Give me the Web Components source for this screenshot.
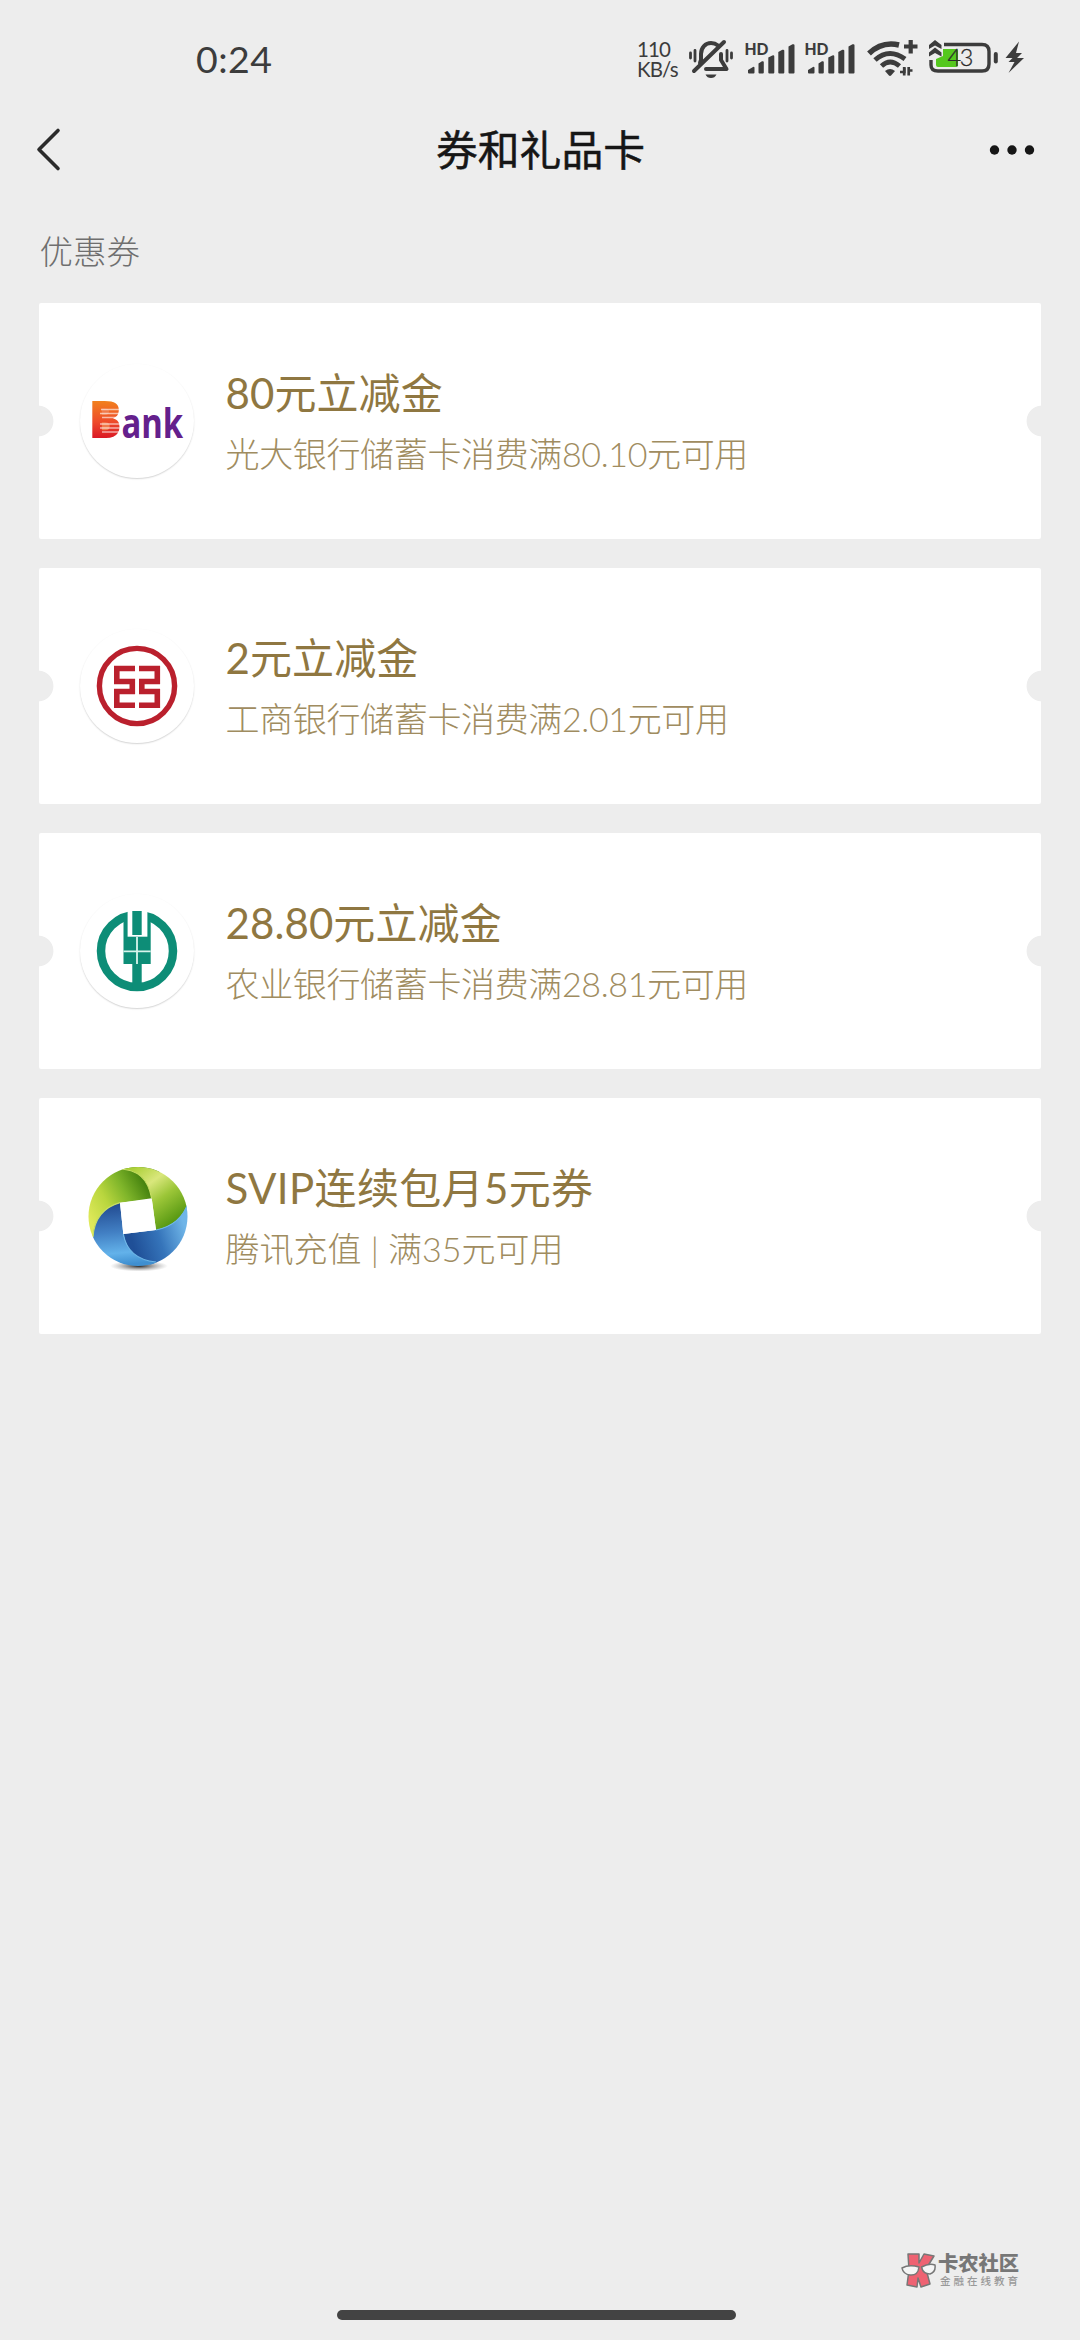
<!DOCTYPE html>
<html lang="zh-CN">
<head>
<meta charset="utf-8">
<title>券和礼品卡</title>
<style>
html,body{margin:0;background:#ededed}
body{width:1080px;height:2340px;overflow:hidden;font-family:Lato,"Noto Sans CJK SC",sans-serif}
</style>
</head>
<body>
<wallet-page></wallet-page>
<script>
const define = (name, html) => customElements.define(name, class extends HTMLElement {
  constructor() {
    super();
    const t = document.createElement('template');
    t.innerHTML = html;
    this.attachShadow({mode: 'open'}).append(t.content.cloneNode(true));
  }
});

define('signal-icon', `
<style>:host{display:block;width:50px;height:40px}svg{display:block}</style>
<svg width="50" height="40" viewBox="0 0 50 40" fill="#3c3c3c">
<text x="-0.5" y="15.5" font-family="Lato" font-weight="900" font-size="16.5" textLength="24" lengthAdjust="spacingAndGlyphs">HD</text>
<path d="M3 31l5-3q1.500-.6 1.500 1v4.500q0 1-1 1H4q-1 0-1-1zM13.500 24.500l3.500-2.200q1.800-.6 1.800 1v10.200q0 1-1 1h-3.300q-1 0-1-1zM23.300 18.500l4-2q2-.6 2 1v16q0 1-1 1H24.300q-1 0-1-1zM33.300 13l4-2.200q2-.6 2 1v21.700q0 1-1 1H34.300q-1 0-1-1zM43.500 7.500l4-2.200q2-.6 2 1v27.200q0 1-1 1h-4q-1 0-1-1z"/>
</svg>`);

define('bell-icon', `
<style>:host{display:block;width:46px;height:40px}svg{display:block}</style>
<svg width="46" height="40" viewBox="0 0 46 40" fill="none" stroke="#3c3c3c" stroke-linecap="round" stroke-linejoin="round">
<path d="M12 24l1-3v-6c0-6.500 4.500-11 10-11 3 0 5 .8 7 2.500" stroke-width="4"/>
<path d="M33 15v6l5.500 9H18" stroke-width="4"/>
<path d="M6 32L36 3" stroke-width="4"/>
<path d="M17.500 35.500h11q-1.700 3.500-5.500 3.500t-5.500-3.500z" fill="#3c3c3c" stroke="none"/>
<path d="M2.500 14v5M7 11.500v10.500M43.500 14v5M39 11.500v10.500" stroke-width="2.800"/>
</svg>`);

define('wifi-icon', `
<style>:host{display:block;width:52px;height:40px}svg{display:block}</style>
<svg width="52" height="40" viewBox="0 0 52 40" fill="none" stroke="#3c3c3c">
<path d="M2 14.500Q15 2 32 6" stroke-width="5.500"/>
<path d="M8 21Q22 8.500 38 20" stroke-width="5"/>
<path d="M14.500 27Q23 19 32.500 27" stroke-width="4.800"/>
<path d="M18 32q5-4 10 0l-3.700 4.300q-1.300 1.200-2.600 0z" fill="#3c3c3c" stroke="none"/>
<path d="M37 7.500h13.500M43.700 1v13.500" stroke-width="4.200"/>
<path d="M33 33h4.500v-4.500M37.200 28v8.500M41.700 28v8.500M41.700 31.500H45.500" stroke-width="2.700"/>
</svg>`);

define('battery-icon', `
<style>:host{display:block;width:96px;height:40px}svg{display:block}</style>
<svg width="96" height="40" viewBox="0 0 96 40" fill="none" stroke="#3c3c3c">
<path d="M15 5.500h38q7 0 7 7v12.500q0 7-7 7H9q-7 0-7-6v-5" stroke-width="3.400"/>
<path d="M7 26V20l7-3V10h13q2 0 2 2v14q0 2-2 2H9q-2 0-2-2z" fill="#55c81f" stroke="none"/>
<path d="M0 6l6-5 6.500 5v4L6 6.500 0 10zM0 13.500l6-5 6.500 5v4L6 14 0 17.500z" fill="#3c3c3c" stroke="none"/>
<text x="18.500" y="26.800" font-family="Lato" font-weight="300" font-size="23.500" fill="#2c2c2c" stroke="#2c2c2c" stroke-width=".3" textLength="26">43</text>
<path d="M66.800 15v7.500" stroke-width="4" stroke-linecap="round"/>
<path d="M90 2.500L76.500 19h7l-4 4h6l-6 11 15.500-15h-7l5-5h-6z" fill="#3c3c3c" stroke="none"/>
</svg>`);

define('status-bar', `
<style>
:host{display:flex;height:118px;align-items:center;color:#3c3c3c;padding:0 55px 0 196px;box-sizing:border-box}
time{font:37.500px/50px Lato;letter-spacing:.5px;flex:1}
.rate{width:51px;font:20.500px/20px Lato;letter-spacing:-.9px}
.rate span{display:block}
.icons{display:flex;height:40px;align-items:flex-start}
bell-icon{margin-right:11px}signal-icon{margin-right:10px}wifi-icon{margin:0 10px 0 2px}
</style>
<time>0:24</time><div class="rate"><span>110</span><span>KB/s</span></div>
<div class="icons"><bell-icon></bell-icon><signal-icon></signal-icon><signal-icon></signal-icon><wifi-icon></wifi-icon><battery-icon></battery-icon></div>`);

define('nav-bar', `
<style>
:host{display:flex;height:63px;align-items:center;padding:0 45px 0 36px;color:#161616}
svg{display:block;width:46px;height:46px}
h1{flex:1;margin:0;padding:0 0 3px 10px;text-align:center;font:400 41.800px/60px "Noto Sans CJK SC",sans-serif;-webkit-text-stroke:.5px #161616}
</style>
<svg viewBox="0 0 46 46" fill="none" stroke="#2b2b2b" stroke-width="3.600" stroke-linecap="round" stroke-linejoin="round"><path d="M22 3.500L3 22.500 22 41.500"/></svg>
<h1><slot></slot></h1>
<svg viewBox="0 0 46 46" fill="#161616"><circle cx="5.500" cy="23" r="4.700"/><circle cx="23" cy="23" r="4.700"/><circle cx="40.500" cy="23" r="4.700"/></svg>`);

define('coupon-card', `
<style>
:host{display:flex;align-items:center;width:1002px;height:236px;box-sizing:border-box;border-radius:2px;padding-left:41px;
background:radial-gradient(circle at -1px 118px,#ededed 15px,transparent 15.800px),radial-gradient(circle at 1003px 118px,#ededed 15px,transparent 15.800px),#fff;color:#8f7741;--sub-ls:-.35px;--title-ls:.1px}
:host([plain]){--sub-ls:0;--title-ls:.35px}
.logo{width:114px;height:114px;border-radius:50%;box-shadow:0 1px 1.500px #d4d4d4;background:#fff;margin-right:31.500px}
:host([plain]) .logo{box-shadow:none}
h2{margin:3.500px 0 0;font:400 42px/60px Lato,"Noto Sans CJK SC",sans-serif;white-space:nowrap;letter-spacing:var(--title-ls)}
p{margin:3px 0 0;font:300 34px/56px Lato,"Noto Sans CJK SC",sans-serif;color:#a08c60;white-space:nowrap;letter-spacing:var(--sub-ls)}
</style>
<div class="logo"><slot name="logo"></slot></div>
<div><h2><slot name="title"></slot></h2><p><slot></slot></p></div>`);

define('everbright-logo', `
<style>:host{display:block}svg{display:block}</style>
<svg width="114" height="114" viewBox="0 0 114 114">
<defs><linearGradient id="g" x2="0" y2="1"><stop offset=".2" stop-color="#f28a1c"/><stop offset=".55" stop-color="#ee4a2a"/><stop offset=".8" stop-color="#d81324"/></linearGradient></defs>
<path d="M20 42H33V70H20z" fill="#f07a4a"/>
<text transform="translate(8.500 74.300) scale(.97 1)" font-family="Open Sans" font-weight="800" font-size="51" fill="url(#g)">B</text>
<path d="M21 45.500h20M20 49.500h20M22 53.500h18M20 60h22M20 64h22M22 68h20" stroke="#fff" stroke-opacity=".6" stroke-width="1.300"/>
<text transform="translate(41.500 74.300) scale(.8 1)" font-family="Open Sans" font-weight="700" font-size="41" fill="#64208c">ank</text>
</svg>`);

define('icbc-logo', `
<style>:host{display:block}svg{display:block}</style>
<svg width="114" height="114" viewBox="0 0 114 114" fill="none" stroke="#ba202d">
<circle cx="57" cy="57" r="37.600" stroke-width="5.400"/>
<path d="M55 39.500H36.800V52.500H52.300V62.500H36.800V76.300H55M59 39.500H77.300V52.500H61.800V62.500H77.300V76.300H59" stroke-width="5.600"/>
</svg>`);

define('abc-logo', `
<style>:host{display:block}svg{display:block}</style>
<svg width="114" height="114" viewBox="0 0 114 114" fill="#0d8d77">
<circle cx="57" cy="57" r="36" fill="none" stroke="#0d8d77" stroke-width="8.500"/>
<path d="M43.500 24H70.700V70H43.500zM52.300 68H61.700V95H52.300z"/>
<path d="M47.600 12H67.400V42.700H47.600z" fill="#fff"/>
<path d="M52.300 17H61.700V41H52.300z"/>
<path d="M57 43V70M43.500 57.300H70.700" stroke="#d8f4ec" stroke-width="1.800"/>
</svg>`);

define('tencent-logo', `
<style>:host{display:block}svg{display:block}</style>
<svg width="114" height="114" viewBox="0 0 114 114">
<defs>
<clipPath id="r"><circle cx="58" cy="57.500" r="49.500"/></clipPath>
<linearGradient id="a" gradientUnits="userSpaceOnUse" x1="10" y1="62" x2="70" y2="28"><stop offset="0" stop-color="#dfe95a"/><stop offset=".35" stop-color="#b9d63e"/><stop offset=".65" stop-color="#7fb52a"/><stop offset="1" stop-color="#3f7d0c"/></linearGradient>
<linearGradient id="b" gradientUnits="userSpaceOnUse" x1="48" y1="8" x2="92" y2="68"><stop offset="0" stop-color="#a3cb2b"/><stop offset=".35" stop-color="#d9e77c"/><stop offset=".6" stop-color="#9cc638"/><stop offset="1" stop-color="#4f930d"/></linearGradient>
<linearGradient id="c" gradientUnits="userSpaceOnUse" x1="52" y1="82" x2="104" y2="66"><stop offset="0" stop-color="#1f4f97"/><stop offset=".5" stop-color="#3574ba"/><stop offset="1" stop-color="#6fb5e8"/></linearGradient>
<linearGradient id="d" gradientUnits="userSpaceOnUse" x1="34" y1="46" x2="40" y2="106"><stop offset="0" stop-color="#234d93"/><stop offset=".45" stop-color="#4280c4"/><stop offset=".8" stop-color="#63b2ea"/><stop offset="1" stop-color="#3f8fd0"/></linearGradient>
<radialGradient id="s"><stop offset="0" stop-color="#222"/><stop offset="1" stop-color="#888" stop-opacity="0"/></radialGradient>
</defs>
<ellipse cx="59" cy="107" rx="29" ry="5.500" fill="url(#s)"/>
<g clip-path="url(#r)">
<path d="M0 0H80V39.300L40 43.700C24 48 14 60 13 80L0 85z" fill="url(#a)"/>
<path d="M38 10C58 10 68 20 71.700 39.300L76 71C92 68 104 58 108 44L114 0H38z" fill="url(#b)"/>
<path d="M108 42C104 58 92 68 76 71L43.300 75C46 88 53 98 66 104L90 114H114V42z" fill="url(#c)"/>
<path d="M13 78C14 60 24 48 40 43.700L43.300 75C46 90 56 101 76 103L70 114H0V84z" fill="url(#d)"/>
<path d="M13 78C14 60 24 48 40 43.700M38 10C58 10 68 20 71.700 39.300" fill="none" stroke="#c6de62" stroke-width="1.200"/>
<path d="M43.300 75C46 90 56 101 76 103M108 44C104 58 92 68 76 71" fill="none" stroke="#6cb5e6" stroke-width="1.200"/>
</g>
<path d="M40 43.700L71.700 39.300 76 71 43.300 75z" fill="#fff"/>
</svg>`);

define('forum-mark', `
<style>
:host{position:absolute;left:901px;top:2250px;display:flex;gap:2px;color:#777}
svg{display:block}b{display:block;font:900 20.300px/25px "Noto Sans CJK SC",sans-serif}
small{display:block;font:500 10.500px/16px "Noto Sans CJK SC",sans-serif;letter-spacing:3px;color:#999;padding-left:2px;margin-top:-2px}
</style>
<svg width="35" height="40" viewBox="0 0 35 40" fill="#ee6272" stroke="#777" stroke-width="1.500" stroke-linejoin="round">
<path d="M7 4H18V13L23 4 33 6 25 19 29 34 20 37 17 28 16 37 6 35 8 20z"/>
<path d="M1 18Q8 14 18 17 17 26 9 25 2 24 1 18zM20.500 17Q28 13 34 15 35 22 29 24 22 24 20.500 17z" fill="#f5f5f5"/>
</svg><div><b>卡农社区</b><small>金融在线教育</small></div>`);

define('wallet-page', `
<style>
:host{display:flex;flex-direction:column;position:relative;width:1080px;height:2340px;background:#ededed}
h3{margin:42px 0 0 39.500px;font:300 33.500px/54px "Noto Sans CJK SC",sans-serif;color:#6f6f6f}
.list{display:flex;flex-direction:column;gap:29px;margin:26px 39px 0}
.home{width:399px;height:10px;border-radius:5px;background:#434343;margin:auto 0 20px 337px}
</style>
<status-bar></status-bar><nav-bar>券和礼品卡</nav-bar><h3>优惠券</h3>
<div class="list">
<coupon-card><everbright-logo slot="logo"></everbright-logo><span slot="title">80元立减金</span>光大银行储蓄卡消费满80.10元可用</coupon-card>
<coupon-card><icbc-logo slot="logo"></icbc-logo><span slot="title">2元立减金</span>工商银行储蓄卡消费满2.01元可用</coupon-card>
<coupon-card><abc-logo slot="logo"></abc-logo><span slot="title">28.80元立减金</span>农业银行储蓄卡消费满28.81元可用</coupon-card>
<coupon-card plain><tencent-logo slot="logo"></tencent-logo><span slot="title">SVIP连续包月5元券</span>腾讯充值 | 满35元可用</coupon-card>
</div><div class="home"></div><forum-mark></forum-mark>`);
</script>
</body>
</html>
